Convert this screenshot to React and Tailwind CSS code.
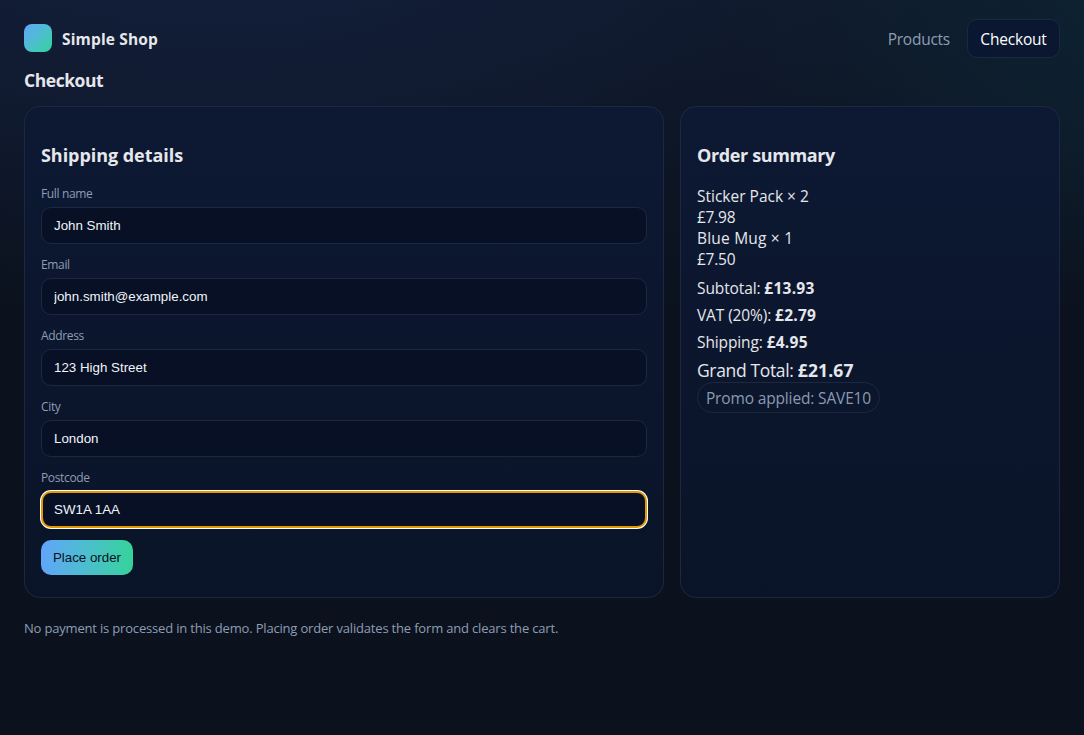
const fields = [
  { label: 'Full name', value: 'John Smith' },
  { label: 'Email', value: 'john.smith@example.com' },
  { label: 'Address', value: '123 High Street' },
  { label: 'City', value: 'London' },
  { label: 'Postcode', value: 'SW1A 1AA', active: true },
];

const items = [
  { name: 'Sticker Pack × 2', price: '£7.98', track: 'tracking-[0px]' },
  { name: 'Blue Mug × 1', price: '£7.50', track: 'tracking-[0.2px]' },
];

const totals = [
  { label: 'Subtotal:', value: '£13.93' },
  { label: 'VAT (20%):', value: '£2.79' },
  { label: 'Shipping:', value: '£4.95' },
];

const card =
  'rounded-2xl border border-[#1c2842] bg-linear-to-b from-[#0d1833] to-[#0a1428] px-4';

function Field({ label, value, active }) {
  return (
    <label className="flex h-[71px] flex-col">
      <span className="h-[21px] text-[12px] leading-[16px] tracking-[-0.35px] text-[#8e9db4]">{label}</span>
      <input
        type="text"
        defaultValue={value}
        className={`h-[37px] w-full rounded-[10px] bg-[#071024] font-['Liberation_Sans',sans-serif] text-[13.333px] text-[#f1f4f9] outline-none ${
          active
            ? 'border-2 border-[#e59700] px-[11px] shadow-[0_0_0_1px_#ffffff]'
            : 'border border-[#1c2842] px-3'
        }`}
      />
    </label>
  );
}

export default function App() {
  return (
    <div className="min-h-screen bg-[#0b121e] bg-[radial-gradient(1200px_600px_at_20%_-10%,#131f3c_0%,transparent_60%),radial-gradient(800px_500px_at_110%_0%,#0d2433_0%,transparent_60%),linear-gradient(#0f1829_0px,#0b121e_320px,#0b121e_100%)] px-6 pt-[19px] font-['Open_Sans','Noto_Sans',sans-serif] text-[15.5px] leading-[21px] text-[#e5e7eb]">
      <header className="flex h-[39px] items-center justify-between">
        <div className="flex items-center gap-[10px]">
          <div className="-mt-px h-7 w-7 rounded-lg bg-linear-to-br from-[#60a5fa] to-[#34d399]" />
          <span className="mt-px font-bold tracking-[0.15px]">Simple Shop</span>
        </div>
        <nav className="flex items-center gap-[17px]">
          <a className="pt-[2px] tracking-[-0.25px] text-[#8e9db4]">Products</a>
          <a className="flex h-[39px] w-[93px] items-center justify-center rounded-[10px] border border-[#1c2842] bg-[#0b1730] pt-[2px] tracking-[-0.2px] text-white">
            Checkout
          </a>
        </nav>
      </header>
      <h1 className="mt-[10px] h-[38px] text-[17.5px] leading-[25px] font-bold tracking-[-0.45px]">Checkout</h1>

      <main className="grid h-[492px] grid-cols-[640px_380px] gap-4">
        <section className={card}>
          <h2 className="mt-[36px] h-[42px] text-[18px] leading-[25px] font-bold tracking-[-0.05px]">Shipping details</h2>
          <form className="pt-px">
            {fields.map((f) => (
              <Field key={f.label} {...f} />
            ))}
            <button
              type="button"
              className="-mt-[1px] h-[35px] w-[92px] rounded-[10px] bg-linear-to-r from-[#60a5fa] to-[#34d399] font-['Liberation_Sans',sans-serif] text-[13.333px] text-[#0b1220]"
            >
              Place order
            </button>
          </form>
        </section>

        <section className={card}>
          <h2 className="mt-[36px] h-[43px] text-[18px] leading-[25px] font-bold tracking-[-0.37px]">Order summary</h2>
          {items.map((i) => (
            <div key={i.name}>
              <div className={i.track}>{i.name}</div>
              <div className="tracking-[-0.25px]">{i.price}</div>
            </div>
          ))}
          <div className="mt-[8px] flex flex-col gap-[6px] tracking-[-0.12px]">
            {totals.map((t) => (
              <div key={t.label}>
                {t.label} <strong className="tracking-[0.25px]">{t.value}</strong>
              </div>
            ))}
          </div>
          <div className="mt-[5px] text-[17.5px] leading-[24px] tracking-[-0.35px]">
            Grand Total: <strong className="tracking-[0.15px]">£21.67</strong>
          </div>
          <div className="flex h-[31px] w-[183px] items-center justify-center rounded-full border border-[#1c2842] pt-[2px] tracking-[-0.15px] text-[#8b9ab2]">
            Promo applied: SAVE10
          </div>
        </section>
      </main>

      <p className="mt-[21px] text-[13px] leading-[18px] tracking-[-0.18px] text-[#8e9db4]">
        No payment is processed in this demo. Placing order validates the form and clears the cart.
      </p>
    </div>
  );
}
